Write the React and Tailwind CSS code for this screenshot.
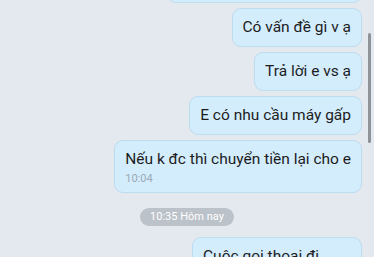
import React from 'react';

const Bubble = ({ text, time, className = '' }) => (
  <div className={`rounded-[9px] border border-[#bcdcef] bg-[#d4edfc] px-[10px] text-[15.5px] leading-[19px] text-[#1c1c1e] ${className}`}>
    <div className={time ? 'pt-[9px]' : 'py-[9px]'}>{text}</div>
    {time && <div className="pb-[6px] pt-[3px] text-[11px] leading-[14px] text-[#9aaab6]">{time}</div>}
  </div>
);

const App = () => {
  const messages = ['Có vấn đề gì v ạ', 'Trả lời e vs ạ', 'E có nhu cầu máy gấp'];

  return (
    <div className="relative h-[257px] w-[374px] overflow-hidden bg-[#e4e9f0]" style={{ fontFamily: 'Roboto, "Noto Sans", sans-serif' }}>
      <div className="flex flex-col items-end gap-[5px] pr-[12px]">
        <Bubble text="Tin nhắn trước" className="-mt-[36px] w-[195px]" />
        {messages.map((m) => (
          <Bubble key={m} text={m} />
        ))}
        <Bubble text="Nếu k đc thì chuyển tiền lại cho e" time="10:04" />
      </div>

      <div className="mt-[15px] flex justify-center">
        <div className="rounded-full bg-[#bcc2ca] px-[10px] text-[11px] leading-[18px] text-white">10:35 Hôm nay</div>
      </div>

      <div className="mt-[11px] flex justify-end pr-[12px]">
        <Bubble text="Cuộc gọi thoại đi" className="w-[170px]" />
      </div>

      <div className="absolute left-[368px] top-[33px] h-[110px] w-[3px] rounded-full bg-[#8e9399]" />
    </div>
  );
};

export default App;
